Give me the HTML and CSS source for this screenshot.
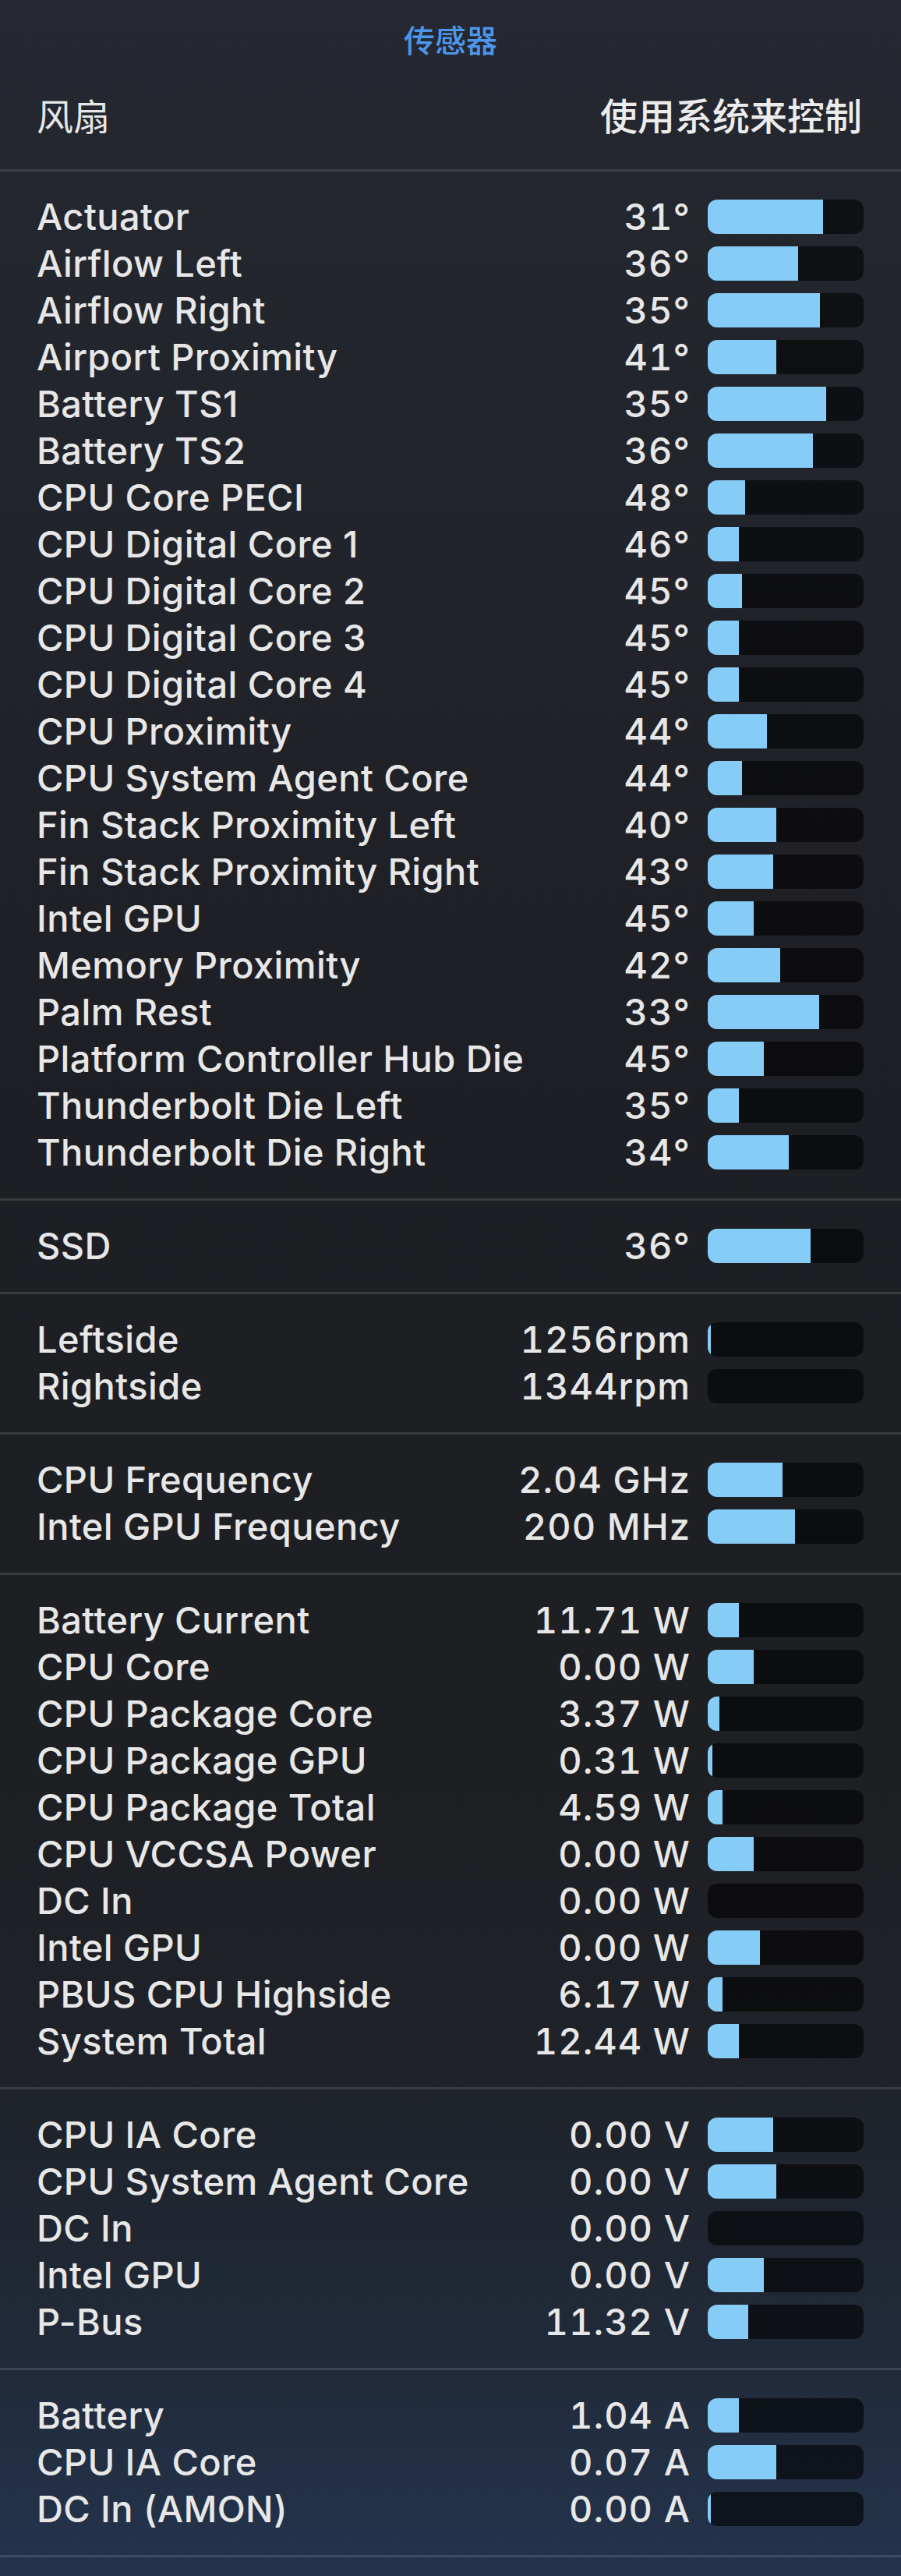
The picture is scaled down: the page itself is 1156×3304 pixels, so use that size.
FILE: index.html
```html
<!DOCTYPE html>
<html lang="zh-CN">
<head>
<meta charset="utf-8">
<title>传感器</title>
<link rel="stylesheet" href="styles.css">
</head>
<body>
<div class="panel">
  <header class="top">
    <div class="title">传感器</div>
    <div class="head-row">
      <span class="head-left">风扇</span>
      <span class="head-right">使用系统来控制</span>
    </div>
  </header>

  <section class="group">
    <div class="row"><span class="label">Actuator</span><span class="value">31°</span><span class="bar"><span class="fill" style="width:148px"></span></span></div>
    <div class="row"><span class="label">Airflow Left</span><span class="value">36°</span><span class="bar"><span class="fill" style="width:116px"></span></span></div>
    <div class="row"><span class="label">Airflow Right</span><span class="value">35°</span><span class="bar"><span class="fill" style="width:144px"></span></span></div>
    <div class="row"><span class="label">Airport Proximity</span><span class="value">41°</span><span class="bar"><span class="fill" style="width:88px"></span></span></div>
    <div class="row"><span class="label">Battery TS1</span><span class="value">35°</span><span class="bar"><span class="fill" style="width:152px"></span></span></div>
    <div class="row"><span class="label">Battery TS2</span><span class="value">36°</span><span class="bar"><span class="fill" style="width:135px"></span></span></div>
    <div class="row"><span class="label">CPU Core PECI</span><span class="value">48°</span><span class="bar"><span class="fill" style="width:48px"></span></span></div>
    <div class="row"><span class="label">CPU Digital Core 1</span><span class="value">46°</span><span class="bar"><span class="fill" style="width:40px"></span></span></div>
    <div class="row"><span class="label">CPU Digital Core 2</span><span class="value">45°</span><span class="bar"><span class="fill" style="width:44px"></span></span></div>
    <div class="row"><span class="label">CPU Digital Core 3</span><span class="value">45°</span><span class="bar"><span class="fill" style="width:40px"></span></span></div>
    <div class="row"><span class="label">CPU Digital Core 4</span><span class="value">45°</span><span class="bar"><span class="fill" style="width:40px"></span></span></div>
    <div class="row"><span class="label">CPU Proximity</span><span class="value">44°</span><span class="bar"><span class="fill" style="width:76px"></span></span></div>
    <div class="row"><span class="label">CPU System Agent Core</span><span class="value">44°</span><span class="bar"><span class="fill" style="width:44px"></span></span></div>
    <div class="row"><span class="label">Fin Stack Proximity Left</span><span class="value">40°</span><span class="bar"><span class="fill" style="width:88px"></span></span></div>
    <div class="row"><span class="label">Fin Stack Proximity Right</span><span class="value">43°</span><span class="bar"><span class="fill" style="width:84px"></span></span></div>
    <div class="row"><span class="label">Intel GPU</span><span class="value">45°</span><span class="bar"><span class="fill" style="width:59px"></span></span></div>
    <div class="row"><span class="label">Memory Proximity</span><span class="value">42°</span><span class="bar"><span class="fill" style="width:93px"></span></span></div>
    <div class="row"><span class="label">Palm Rest</span><span class="value">33°</span><span class="bar"><span class="fill" style="width:143px"></span></span></div>
    <div class="row"><span class="label">Platform Controller Hub Die</span><span class="value">45°</span><span class="bar"><span class="fill" style="width:72px"></span></span></div>
    <div class="row"><span class="label">Thunderbolt Die Left</span><span class="value">35°</span><span class="bar"><span class="fill" style="width:40px"></span></span></div>
    <div class="row"><span class="label">Thunderbolt Die Right</span><span class="value">34°</span><span class="bar"><span class="fill" style="width:104px"></span></span></div>
  </section>

  <section class="group">
    <div class="row"><span class="label">SSD</span><span class="value">36°</span><span class="bar"><span class="fill" style="width:132px"></span></span></div>
  </section>

  <section class="group">
    <div class="row"><span class="label">Leftside</span><span class="value">1256rpm</span><span class="bar"><span class="fill" style="width:4px"></span></span></div>
    <div class="row"><span class="label">Rightside</span><span class="value">1344rpm</span><span class="bar"><span class="fill" style="width:0px"></span></span></div>
  </section>

  <section class="group">
    <div class="row"><span class="label">CPU Frequency</span><span class="value">2.04 GHz</span><span class="bar"><span class="fill" style="width:96px"></span></span></div>
    <div class="row"><span class="label">Intel GPU Frequency</span><span class="value">200 MHz</span><span class="bar"><span class="fill" style="width:112px"></span></span></div>
  </section>

  <section class="group">
    <div class="row"><span class="label">Battery Current</span><span class="value">11.71 W</span><span class="bar"><span class="fill" style="width:40px"></span></span></div>
    <div class="row"><span class="label">CPU Core</span><span class="value">0.00 W</span><span class="bar"><span class="fill" style="width:59px"></span></span></div>
    <div class="row"><span class="label">CPU Package Core</span><span class="value">3.37 W</span><span class="bar"><span class="fill" style="width:15px"></span></span></div>
    <div class="row"><span class="label">CPU Package GPU</span><span class="value">0.31 W</span><span class="bar"><span class="fill" style="width:6px"></span></span></div>
    <div class="row"><span class="label">CPU Package Total</span><span class="value">4.59 W</span><span class="bar"><span class="fill" style="width:19px"></span></span></div>
    <div class="row"><span class="label">CPU VCCSA Power</span><span class="value">0.00 W</span><span class="bar"><span class="fill" style="width:59px"></span></span></div>
    <div class="row"><span class="label">DC In</span><span class="value">0.00 W</span><span class="bar"><span class="fill" style="width:0px"></span></span></div>
    <div class="row"><span class="label">Intel GPU</span><span class="value">0.00 W</span><span class="bar"><span class="fill" style="width:67px"></span></span></div>
    <div class="row"><span class="label">PBUS CPU Highside</span><span class="value">6.17 W</span><span class="bar"><span class="fill" style="width:19px"></span></span></div>
    <div class="row"><span class="label">System Total</span><span class="value">12.44 W</span><span class="bar"><span class="fill" style="width:40px"></span></span></div>
  </section>

  <section class="group">
    <div class="row"><span class="label">CPU IA Core</span><span class="value">0.00 V</span><span class="bar"><span class="fill" style="width:84px"></span></span></div>
    <div class="row"><span class="label">CPU System Agent Core</span><span class="value">0.00 V</span><span class="bar"><span class="fill" style="width:88px"></span></span></div>
    <div class="row"><span class="label">DC In</span><span class="value">0.00 V</span><span class="bar"><span class="fill" style="width:0px"></span></span></div>
    <div class="row"><span class="label">Intel GPU</span><span class="value">0.00 V</span><span class="bar"><span class="fill" style="width:72px"></span></span></div>
    <div class="row"><span class="label">P-Bus</span><span class="value">11.32 V</span><span class="bar"><span class="fill" style="width:52px"></span></span></div>
  </section>

  <section class="group">
    <div class="row"><span class="label">Battery</span><span class="value">1.04 A</span><span class="bar"><span class="fill" style="width:40px"></span></span></div>
    <div class="row"><span class="label">CPU IA Core</span><span class="value">0.07 A</span><span class="bar"><span class="fill" style="width:88px"></span></span></div>
    <div class="row"><span class="label">DC In (AMON)</span><span class="value">0.00 A</span><span class="bar"><span class="fill" style="width:4px"></span></span></div>
  </section>

  <div class="foot"></div>
</div>
</body>
</html>
```

FILE: styles.css
```css
html, body {
  margin: 0;
  padding: 0;
}

body {
  width: 1156px;
  min-height: 3304px;
  background: linear-gradient(to bottom,
    #252830 0px,
    #22242b 700px,
    #1e1f24 1400px,
    #1e1f23 2300px,
    #1f232a 2700px,
    #212b3b 3050px,
    #24344e 3304px);
  color: #e7e7e7;
  font-family: "Inter", "Noto Sans CJK SC", sans-serif;
  -webkit-font-smoothing: antialiased;
}

.panel {
  display: flex;
  flex-direction: column;
}

.top {
  padding: 25px 50px 37px 47px;
}

.title {
  text-align: center;
  color: #4d97ea;
  font-size: 40px;
  font-weight: 500;
  line-height: 56px;
  padding-left: 3px;
}

.head-row {
  margin-top: 39px;
  display: flex;
  justify-content: space-between;
  align-items: center;
  height: 60px;
  font-size: 47px;
  line-height: 60px;
}

.head-left {
  font-weight: 400;
}

.head-right {
  font-weight: 500;
  font-size: 48px;
  color: #ececec;
}

.group {
  border-top: 3px solid rgba(255, 255, 255, 0.12);
  padding: 28px 48px 29px 47px;
}

.row {
  display: flex;
  align-items: center;
  height: 60px;
  font-size: 47px;
  font-weight: 450;
  letter-spacing: 0.4px;
  line-height: 60px;
}

.label {
  flex: 1;
  white-space: nowrap;
}

.value {
  text-align: right;
  white-space: nowrap;
  font-variant-numeric: tabular-nums;
  letter-spacing: 1px;
}

.bar {
  flex: none;
  width: 200px;
  height: 44px;
  margin-left: 22px;
  border-radius: 12px;
  overflow: hidden;
  background: rgba(0, 0, 0, 0.58);
  display: flex;
}

.fill {
  display: block;
  height: 100%;
  background: #85ccf7;
}

.foot {
  border-top: 3px solid rgba(255, 255, 255, 0.12);
  height: 24px;
}
```
